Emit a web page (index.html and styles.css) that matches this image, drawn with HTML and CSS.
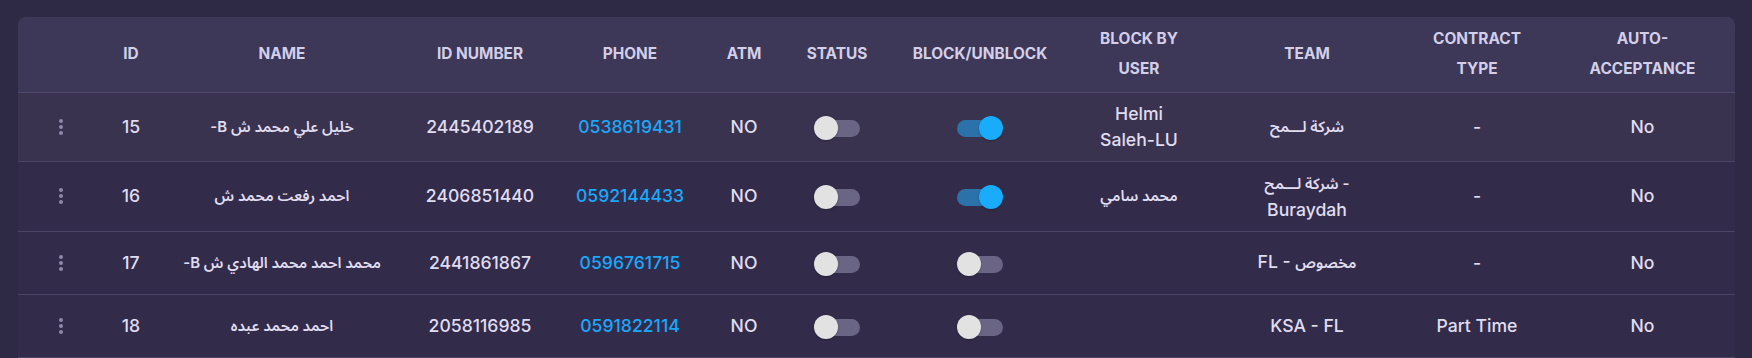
FILE: index.html
```html
<!DOCTYPE html>
<html lang="en">
<head>
<meta charset="utf-8">
<title>Users</title>
<link rel="stylesheet" href="styles.css">
</head>
<body>
<div class="card">
  <table class="grid">
    <colgroup>
      <col class="c-menu"><col class="c-id"><col class="c-name"><col class="c-idnum"><col class="c-phone"><col class="c-atm"><col class="c-status"><col class="c-block"><col class="c-blockby"><col class="c-team"><col class="c-contract"><col class="c-auto">
    </colgroup>
    <thead>
      <tr>
        <th></th>
        <th>ID</th>
        <th>NAME</th>
        <th>ID NUMBER</th>
        <th>PHONE</th>
        <th>ATM</th>
        <th>STATUS</th>
        <th>BLOCK/UNBLOCK</th>
        <th>BLOCK BY<br>USER</th>
        <th>TEAM</th>
        <th>CONTRACT<br>TYPE</th>
        <th>AUTO-<br>ACCEPTANCE</th>
      </tr>
    </thead>
    <tbody>
      <tr class="hover">
        <td><svg class="kebab" width="4" height="16" viewBox="0 0 4 16"><circle cx="2" cy="2" r="2"/><circle cx="2" cy="8" r="2"/><circle cx="2" cy="14" r="2"/></svg></td>
        <td>15</td>
        <td class="ar"><span dir="rtl">خليل علي محمد ش B-</span></td>
        <td>2445402189</td>
        <td class="phone">0538619431</td>
        <td>NO</td>
        <td><span class="switch"></span></td>
        <td><span class="switch on"></span></td>
        <td>Helmi<br>Saleh-LU</td>
        <td class="ar">شركة لـــمح</td>
        <td>-</td>
        <td>No</td>
      </tr>
      <tr>
        <td><svg class="kebab" width="4" height="16" viewBox="0 0 4 16"><circle cx="2" cy="2" r="2"/><circle cx="2" cy="8" r="2"/><circle cx="2" cy="14" r="2"/></svg></td>
        <td>16</td>
        <td class="ar"><span dir="rtl">احمد رفعت محمد ش</span></td>
        <td>2406851440</td>
        <td class="phone">0592144433</td>
        <td>NO</td>
        <td><span class="switch"></span></td>
        <td><span class="switch on"></span></td>
        <td class="ar">محمد سامي</td>
        <td><span class="ar">شركة لـــمح -</span><br>Buraydah</td>
        <td>-</td>
        <td>No</td>
      </tr>
      <tr>
        <td><svg class="kebab" width="4" height="16" viewBox="0 0 4 16"><circle cx="2" cy="2" r="2"/><circle cx="2" cy="8" r="2"/><circle cx="2" cy="14" r="2"/></svg></td>
        <td>17</td>
        <td class="ar"><span dir="rtl">محمد احمد محمد الهادي ش B-</span></td>
        <td>2441861867</td>
        <td class="phone">0596761715</td>
        <td>NO</td>
        <td><span class="switch"></span></td>
        <td><span class="switch"></span></td>
        <td></td>
        <td>FL - <span class="ar">مخصوص</span></td>
        <td>-</td>
        <td>No</td>
      </tr>
      <tr>
        <td><svg class="kebab" width="4" height="16" viewBox="0 0 4 16"><circle cx="2" cy="2" r="2"/><circle cx="2" cy="8" r="2"/><circle cx="2" cy="14" r="2"/></svg></td>
        <td>18</td>
        <td class="ar"><span dir="rtl">احمد محمد عبده</span></td>
        <td>2058116985</td>
        <td class="phone">0591822114</td>
        <td>NO</td>
        <td><span class="switch"></span></td>
        <td><span class="switch"></span></td>
        <td></td>
        <td>KSA - FL</td>
        <td>Part Time</td>
        <td>No</td>
      </tr>
    </tbody>
  </table>
</div>
</body>
</html>
```

FILE: styles.css
```css
html, body {
  margin: 0;
  padding: 0;
  background: #2e2a45;
}

body {
  padding: 17px 17px 0 18px;
  font-family: Inter, "Noto Sans Arabic", "DejaVu Sans", sans-serif;
  color: #e0ddf1;
}

.card {
  background: #322c4a;
  border-radius: 8px 8px 0 0;
  overflow: hidden;
}

.grid {
  width: 100%;
  table-layout: fixed;
  border-collapse: collapse;
}

.c-menu { width: 86px; }
.c-id { width: 54px; }
.c-name { width: 248px; }
.c-idnum { width: 148px; }
.c-phone { width: 152px; }
.c-atm { width: 76px; }
.c-status { width: 110px; }
.c-block { width: 176px; }
.c-blockby { width: 142px; }
.c-team { width: 194px; }
.c-contract { width: 146px; }
.c-auto { width: auto; }

thead tr {
  background: #3d3858;
}

th {
  height: 75px;
  box-sizing: border-box;
  padding: 7px 8px;
  font-size: 15.4px;
  line-height: 30px;
  font-weight: 700;
  color: #d3cfe8;
  text-align: center;
  vertical-align: middle;
  border-bottom: 1px solid #4f4a6b;
  white-space: nowrap;
}

td {
  height: 63px;
  box-sizing: border-box;
  padding: 8px 8px;
  font-size: 17.6px;
  line-height: 26px;
  font-weight: 500;
  text-align: center;
  vertical-align: middle;
  border-bottom: 1px solid #4a4565;
  white-space: nowrap;
}

tbody tr.hover {
  background: #39334f;
}

.ar {
  font-weight: 600;
  font-size: 15px;
}

.phone {
  color: #1aa8fb;
}

.kebab {
  display: block;
  margin: 0 auto;
  fill: #8e89a8;
}

.switch {
  position: relative;
  display: inline-block;
  width: 46px;
  height: 24px;
  vertical-align: middle;
}

.switch::before {
  content: "";
  position: absolute;
  left: 4px;
  right: 0;
  top: 4px;
  height: 17px;
  border-radius: 9px;
  background: #6a6485;
}

.switch::after {
  content: "";
  position: absolute;
  left: 0;
  top: 0;
  width: 24px;
  height: 24px;
  border-radius: 50%;
  background: #e2e2e2;
  box-shadow: 0 1px 2px rgba(0, 0, 0, 0.25);
}

.switch.on::before {
  left: 0;
  right: 4px;
  background: #2a72a9;
}

.switch.on::after {
  left: auto;
  right: 0;
  background: #19acfb;
}
```
